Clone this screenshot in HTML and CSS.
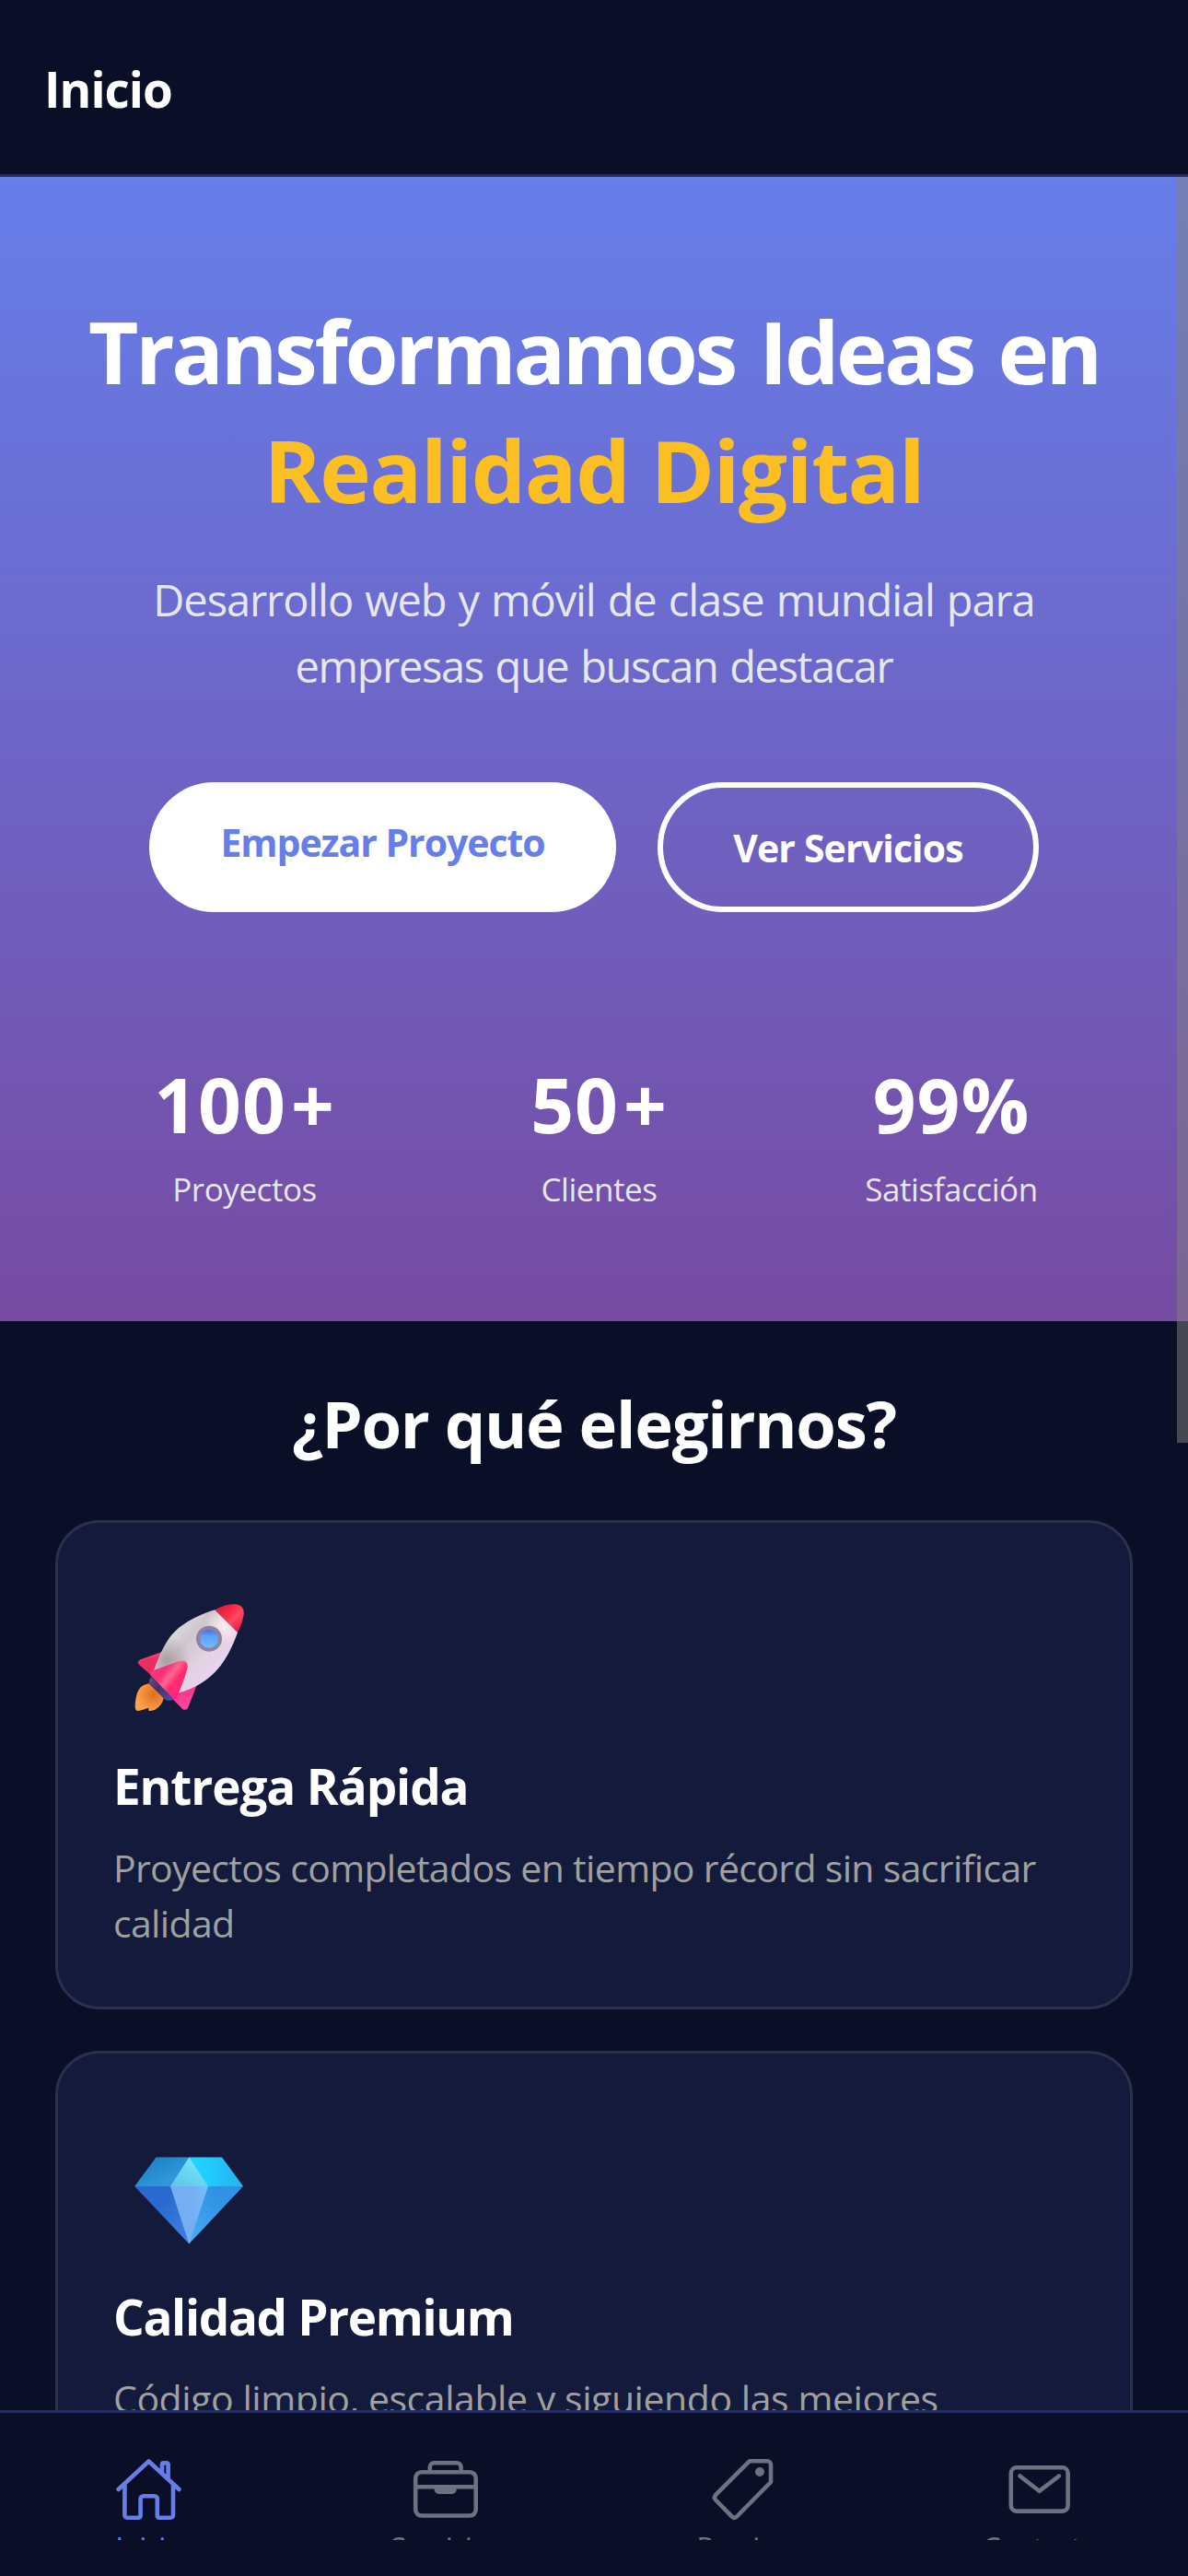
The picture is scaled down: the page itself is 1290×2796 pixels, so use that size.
FILE: index.html
```html
<!DOCTYPE html>
<html lang="es">
<head>
<meta charset="utf-8">
<title>Inicio</title>
<link rel="stylesheet" href="styles.css">
</head>
<body>
<header class="topbar"><h1 class="topbar-title">Inicio</h1></header>

<main class="content">
  <section class="hero">
    <h2 class="hero-title"><span class="hero-line">Transformamos Ideas en</span><span class="hero-accent">Realidad Digital</span></h2>
    <p class="hero-sub"><span class="sub-a">Desarrollo web y móvil de clase mundial para</span><span class="sub-b">empresas que buscan destacar</span></p>
    <div class="hero-actions">
      <a class="btn btn-solid">Empezar Proyecto</a>
      <a class="btn btn-outline">Ver Servicios</a>
    </div>
    <div class="stats">
      <div class="stat stat-projects"><b class="stat-num">100<span class="plus">+</span></b><span class="stat-label">Proyectos</span></div>
      <div class="stat stat-clients"><b class="stat-num">50<span class="plus">+</span></b><span class="stat-label">Clientes</span></div>
      <div class="stat stat-satisfaction"><b class="stat-num">99%</b><span class="stat-label">Satisfacción</span></div>
    </div>
  </section>

  <section class="features">
    <h2 class="features-title">¿Por qué elegirnos?</h2>
    <article class="card">
      <div class="card-icon">
        <svg width="130" height="130" viewBox="0 0 390 390">
          <defs>
            <linearGradient id="body" x1="0.15" y1="0.3" x2="0.75" y2="0.8"><stop offset="0" stop-color="#dcdcdc"/><stop offset=".3" stop-color="#d2c6ce"/><stop offset=".65" stop-color="#e2d2e2"/><stop offset="1" stop-color="#ead3f2"/></linearGradient>
            <radialGradient id="shade" gradientUnits="userSpaceOnUse" cx="125" cy="200" r="75"><stop offset="0" stop-color="#9d9294" stop-opacity=".75"/><stop offset="1" stop-color="#9d9294" stop-opacity="0"/></radialGradient>
            <radialGradient id="shine" gradientUnits="userSpaceOnUse" cx="310" cy="88" r="60"><stop offset="0" stop-color="#fff3f6" stop-opacity=".8"/><stop offset="1" stop-color="#fff3f6" stop-opacity="0"/></radialGradient>
            <linearGradient id="nose" x1="0.2" y1="0.2" x2="0.85" y2="0.8"><stop offset="0" stop-color="#e5203f"/><stop offset=".35" stop-color="#fb2c47"/><stop offset=".65" stop-color="#fc4b63"/><stop offset="1" stop-color="#f02146"/></linearGradient>
            <linearGradient id="fin" x1="0.1" y1="0.25" x2="0.85" y2="0.85"><stop offset="0" stop-color="#f7357b"/><stop offset=".25" stop-color="#fb2f7a"/><stop offset=".45" stop-color="#ff6692"/><stop offset=".65" stop-color="#ff2b6b"/><stop offset="1" stop-color="#ff2388"/></linearGradient>
            <linearGradient id="finleft" x1="0.3" y1="0" x2="0.6" y2="1"><stop offset="0" stop-color="#fb6a93"/><stop offset=".35" stop-color="#ee2c61"/><stop offset="1" stop-color="#ea2c60"/></linearGradient>
            <linearGradient id="finright" x1="0.2" y1="0" x2="0.6" y2="1"><stop offset="0" stop-color="#ef2a72"/><stop offset=".6" stop-color="#ff3f94"/><stop offset="1" stop-color="#ea4fa8"/></linearGradient>
            <linearGradient id="nozzle" x1="0" y1="0" x2="1" y2="1"><stop offset="0" stop-color="#6a5680"/><stop offset=".4" stop-color="#43316b"/><stop offset="1" stop-color="#4b4fae"/></linearGradient>
            <radialGradient id="flame" cx=".65" cy=".4" r=".6"><stop offset="0" stop-color="#d9701f"/><stop offset=".6" stop-color="#f38c38"/><stop offset="1" stop-color="#ff9e4c"/></radialGradient>
            <linearGradient id="glass" x1="0" y1="0" x2="0" y2="1"><stop offset="0" stop-color="#4569f2"/><stop offset=".35" stop-color="#5fa0fd"/><stop offset="1" stop-color="#69befd"/></linearGradient>
          </defs>
          <path fill="url(#flame)" d="M66 277Q92 285 113 325Q108 350 85 362Q68 368 64 365L64 356Q48 362 32 366Q20 368 20 352Q22 292 50 281Z"/>
          <path fill="url(#nozzle)" d="M72 256Q62 268 67 280L118 329Q131 337 147 328Z"/>
          <path fill="url(#finleft)" d="M107 174L38 199Q26 205 30 213L75 252L90 225Z"/>
          <path fill="url(#finright)" d="M222 280L160 305L144 329L174 359Q184 367 192 357Z"/>
          <path fill="url(#body)" d="M280 37L354 110C335 165 310 210 280 240C250 270 210 295 161 308L81 235C100 180 125 130 150 107C185 74 235 50 280 37Z"/>
          <path fill="url(#shade)" d="M280 37L354 110C335 165 310 210 280 240C250 270 210 295 161 308L81 235C100 180 125 130 150 107C185 74 235 50 280 37Z"/>
          <path fill="url(#shine)" d="M280 37L354 110C335 165 310 210 280 240C250 270 210 295 161 308L81 235C100 180 125 130 150 107C185 74 235 50 280 37Z"/>
          <path fill="url(#nose)" d="M280 37Q310 19 345 18Q377 21 374 52Q369 85 354 110Z"/>
          <circle cx="261" cy="131" r="42" fill="#8e839b"/><circle cx="261" cy="131" r="30" fill="url(#glass)"/>
          <path fill="url(#fin)" d="M74 236L163 204Q190 197 191 220Q190 240 162 308Q158 326 147 329L75 256Q63 243 74 236Z"/>
        </svg>
      </div>
      <h3 class="card-title card-title-fast">Entrega Rápida</h3>
      <p class="card-text">Proyectos completados en tiempo récord sin sacrificar calidad</p>
    </article>
    <article class="card">
      <div class="card-icon">
        <svg width="130" height="130" viewBox="0 0 130 130">
          <defs>
            <linearGradient id="g1" x1="0" y1="0" x2="1" y2="1"><stop offset=".2" stop-color="#1e83c9"/><stop offset=".7" stop-color="#2f97d9"/></linearGradient>
            <linearGradient id="g2" x1="0" y1="0" x2="1" y2="0"><stop offset=".2" stop-color="#20d2ff"/><stop offset=".8" stop-color="#24b9f5"/></linearGradient>
            <linearGradient id="g3" x1="0" y1="1" x2=".8" y2="0"><stop offset="0" stop-color="#61c2e4"/><stop offset="1" stop-color="#74eaff"/></linearGradient>
            <linearGradient id="g4" x1="0" y1="0" x2="1" y2="1"><stop offset=".4" stop-color="#2a69cf"/><stop offset="1" stop-color="#4382e4"/></linearGradient>
            <linearGradient id="g5" x1="1" y1="0" x2="0" y2="1"><stop offset=".3" stop-color="#3191e4"/><stop offset="1" stop-color="#47acf5"/></linearGradient>
            <linearGradient id="g6" x1="0" y1="0" x2="1" y2="0"><stop offset=".6" stop-color="#76adf3"/><stop offset="1" stop-color="#73c2fb"/></linearGradient>
          </defs>
          <path fill="url(#g1)" d="M29.5 30.5H65.3V62H6.2Z"/>
          <path fill="url(#g2)" d="M65.3 30.5H101L124 62H65.3Z"/>
          <path fill="url(#g4)" d="M6.2 62H65.3V124.5Z"/>
          <path fill="url(#g5)" d="M124 62H65.3V124.5Z"/>
          <path fill="url(#g3)" d="M65.3 30.5L86 62H45Z"/>
          <path fill="url(#g6)" d="M45 62H86L65.3 124.5Z"/>
        </svg>
      </div>
      <h3 class="card-title">Calidad Premium</h3>
      <p class="card-text card-text-quality">Código limpio, escalable y siguiendo las mejores prácticas</p>
    </article>
  </section>
  <div class="scroll-thumb"></div>
</main>

<nav class="tabs">
  <a class="tab tab-active">
    <svg class="tab-icon" viewBox="0 0 75 75"><path d="M4.5 38L37.5 7.5L70.5 38M11.4 32.5V66a2.7 2.7 0 0 0 2.7 2.7H26.6a2 2 0 0 0 2-2V48.2a3 3 0 0 1 3-3h12.2a3 3 0 0 1 3 3V66.7a2 2 0 0 0 2 2H61.3a2.7 2.7 0 0 0 2.7-2.7V32.5M52 20.5V11a1.6 1.6 0 0 1 1.6-1.6h3.4a1.6 1.6 0 0 1 1.6 1.6V26"/></svg>
    <span class="tab-label">Inicio</span>
  </a>
  <a class="tab">
    <svg class="tab-icon" viewBox="0 0 75 75"><rect x="5.2" y="19.3" width="65.5" height="47.2" rx="6.5"/><path d="M20.8 19V13.8a4.5 4.5 0 0 1 4.5-4.5h24.8a4.5 4.5 0 0 1 4.5 4.5V19M5.2 35.3H70.7"/><path class="fill" d="M25.6 35v3a5 5 0 0 0 5 5h14.2a5 5 0 0 0 5-5v-3z"/></svg>
    <span class="tab-label">Servicios</span>
  </a>
  <a class="tab">
    <svg class="tab-icon" viewBox="0 0 75 75"><path d="M45 7.2H64a4 4 0 0 1 4 4V30L31 67.5q-2.6 2.6-5.2 0L8.2 49.5q-2.6-2.8 0-5.6Z"/><circle class="fill" cx="56" cy="19" r="5"/></svg>
    <span class="tab-label">Precios</span>
  </a>
  <a class="tab">
    <svg class="tab-icon" viewBox="0 0 75 75"><rect x="6.8" y="14.3" width="61.8" height="47.3" rx="6"/><path d="M16.5 23.5L37.5 39.8L58.9 23.5"/></svg>
    <span class="tab-label">Contacto</span>
  </a>
</nav>
</body>
</html>
```
FILE: styles.css
```css
* { box-sizing: border-box; }

body {
  margin: 0;
  height: 2796px;
  display: flex;
  flex-direction: column;
  overflow: hidden;
  background: #0a0e27;
  color: #fff;
  font-family: "Open Sans", "Noto Sans", sans-serif;
}

h1, h2, h3, p { margin: 0; }

.topbar {
  flex: none;
  height: 192px;
  padding: 61px 48px 0;
  border-bottom: 3px solid #262f61;
}
.topbar-title { font-size: 53px; line-height: 72px; letter-spacing: -1px; }

.content { position: relative; flex: 1; min-height: 0; overflow: hidden; }

.hero {
  display: flex;
  flex-direction: column;
  align-items: center;
  height: 1242px;
  padding: 125px 60px 0;
  background: linear-gradient(180deg, #667eea, #764ba2);
  text-align: center;
  white-space: nowrap;
}
.hero-title { display: flex; flex-direction: column; font-size: 94px; line-height: 129px; }
.hero-line { letter-spacing: -3.4px; word-spacing: 5.5px; }
.hero-accent { letter-spacing: -1.34px; color: #fbbf24; }
.hero-sub {
  display: flex;
  flex-direction: column;
  margin-top: 40px;
  font-size: 47px;
  line-height: 72px;
  color: #e5e7eb;
}
.sub-a { letter-spacing: -1.1px; word-spacing: 2px; }
.sub-b { letter-spacing: -1.38px; word-spacing: 2px; }

.hero-actions { display: flex; gap: 45px; margin-top: 90px; }
.btn {
  height: 141px;
  border-radius: 75px;
  font-size: 41px;
  font-weight: 700;
  line-height: 57px;
}
.btn-solid { width: 507px; padding-top: 37px; background: #fff; color: #667eea; letter-spacing: -1.05px; }
.btn-outline { width: 414px; padding-top: 37px; border: 6px solid #fff; letter-spacing: -0.85px; }

.stats { display: flex; justify-content: space-between; align-self: stretch; margin-top: 152px; padding: 0 102px 0 108px; }
.stat { display: flex; flex-direction: column; align-items: center; gap: 13px; }
.stat-projects { width: 195px; }
.stat-clients { width: 149px; }
.stat-satisfaction { width: 190px; }
.stat-num { font-size: 82px; line-height: 112px; letter-spacing: 1px; }
.plus { margin-left: 5px; }
.stat-label { font-size: 35px; line-height: 48px; letter-spacing: -0.45px; color: #e5e7eb; }

.features { display: flex; flex-direction: column; padding: 63px 60px 0; }
.features-title {
  margin-bottom: 57px;
  font-size: 70.5px;
  line-height: 96px;
  letter-spacing: -1.25px;
  text-align: center;
}
.card {
  height: 531px;
  margin-bottom: 45px;
  padding: 60px;
  background: #141a3b;
  border: 3px solid #2b304f;
  border-radius: 48px;
}
.card-icon { height: 190px; padding: 22px 0 0 17px; }
.card-icon svg { display: block; }
.card-title { font-size: 53px; line-height: 72px; letter-spacing: -1.35px; }
.card-title-fast { letter-spacing: -1.1px; }
.card-text {
  margin-top: 22px;
  font-size: 41px;
  line-height: 60px;
  letter-spacing: -0.66px;
  color: #a0a0a0;
}
.card-text-quality { letter-spacing: -0.44px; }

.scroll-thumb {
  position: absolute;
  top: 0;
  right: 0;
  width: 12px;
  height: 1374px;
  background: rgba(128, 128, 128, 0.5);
}

.tabs {
  flex: none;
  display: flex;
  height: 180px;
  border-top: 3px solid #262f61;
}
.tab {
  flex: 1;
  display: flex;
  flex-direction: column;
  align-items: center;
  gap: 4px;
  height: 138px;
  padding-top: 45px;
  overflow: hidden;
  color: #6b7280;
}
.tab-active { color: #667eea; }
.tab-icon {
  flex: none;
  width: 75px;
  height: 75px;
  fill: none;
  stroke: currentColor;
  stroke-width: 4.6;
  stroke-linecap: round;
  stroke-linejoin: round;
}
.tab-icon .fill { fill: currentColor; stroke: none; }
.tab-label { font-size: 32px; line-height: 45px; font-weight: 500; letter-spacing: -1.2px; }
```
